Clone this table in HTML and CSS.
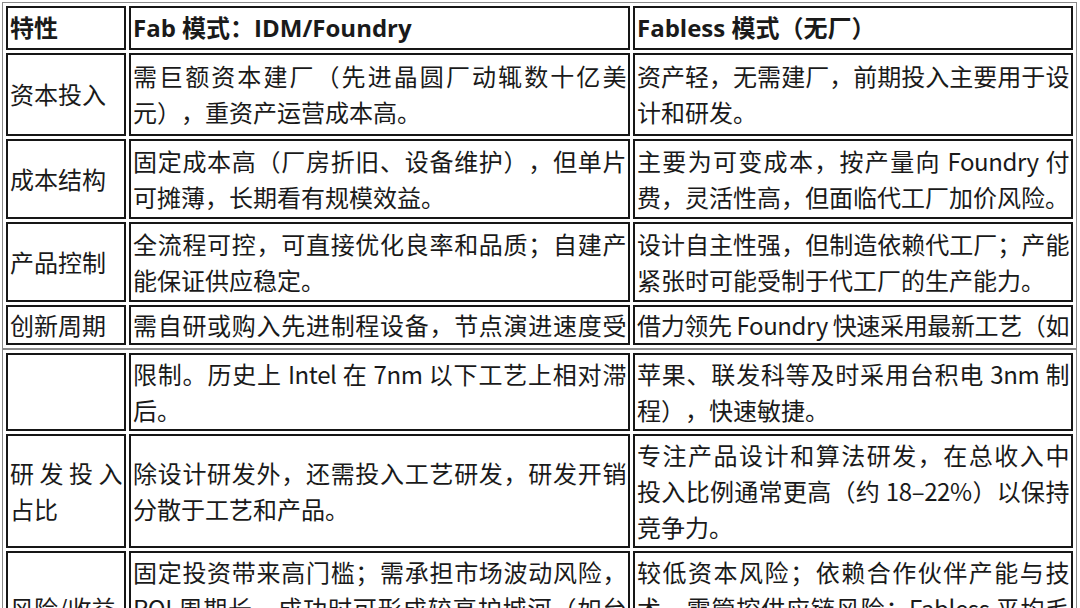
FILE: index.html
```html
<!DOCTYPE html>
<html lang="zh-CN">
<head>
<meta charset="utf-8">
<title>Fab vs Fabless</title>
<link rel="stylesheet" href="styles.css">
</head>
<body>
<table class="grid first">
  <colgroup><col class="c1"><col class="c2"><col class="c3"></colgroup>
  <tr class="head">
    <th>特性</th>
    <th>Fab 模式：IDM/Foundry</th>
    <th>Fabless 模式（无厂）</th>
  </tr>
  <tr class="r-tall">
    <td>资本投入</td>
    <td><span class="ln">需巨额资本建厂（先进晶圆厂动辄数十亿美</span><span class="end">元），重资产运营成本高。</span></td>
    <td><span class="ln">资产轻，无需建厂，前期投入主要用于设</span><span class="end">计和研发。</span></td>
  </tr>
  <tr>
    <td>成本结构</td>
    <td><span class="ln">固定成本高（厂房折旧、设备维护），但单片</span><span class="end">可摊薄，长期看有规模效益。</span></td>
    <td><span class="ln">主要为可变成本，按产量向 Foundry 付</span><span class="end">费，灵活性高，但面临代工厂加价风险。</span></td>
  </tr>
  <tr>
    <td>产品控制</td>
    <td><span class="ln">全流程可控，可直接优化良率和品质；自建产</span><span class="end">能保证供应稳定。</span></td>
    <td><span class="ln">设计自主性强，但制造依赖代工厂；产能</span><span class="end">紧张时可能受制于代工厂的生产能力。</span></td>
  </tr>
  <tr class="split">
    <td>创新周期</td>
    <td><span class="ln">需自研或购入先进制程设备，节点演进速度受</span></td>
    <td><span class="ln">借力领先 Foundry 快速采用最新工艺（如</span></td>
  </tr>
</table>
<table class="grid second">
  <colgroup><col class="c1"><col class="c2"><col class="c3"></colgroup>
  <tr>
    <td></td>
    <td><span class="ln">限制。历史上 Intel 在 7nm 以下工艺上相对滞</span><span class="end">后。</span></td>
    <td><span class="ln">苹果、联发科等及时采用台积电 3nm 制</span><span class="end">程），快速敏捷。</span></td>
  </tr>
  <tr>
    <td><span class="ln">研发投入</span><span class="end">占比</span></td>
    <td><span class="ln">除设计研发外，还需投入工艺研发，研发开销</span><span class="end">分散于工艺和产品。</span></td>
    <td><span class="ln">专注产品设计和算法研发，在总收入中</span><span class="ln">投入比例通常更高（约 18–22%）以保持</span><span class="end">竞争力。</span></td>
  </tr>
  <tr>
    <td><span class="end">风险/收益</span></td>
    <td><span class="ln">固定投资带来高门槛；需承担市场波动风险，</span><span class="ln">ROI 周期长，成功时可形成较高护城河（如台</span><span class="end">积电）。</span></td>
    <td><span class="ln">较低资本风险；依赖合作伙伴产能与技</span><span class="ln">术，需管控供应链风险；Fabless 平均毛</span><span class="end">利率较高。</span></td>
  </tr>
</table>
</body>
</html>
```

FILE: styles.css
```css
html, body {
  margin: 0;
  padding: 0;
  background: #ffffff;
}

body {
  font-family: "Noto Sans CJK SC", sans-serif;
  font-size: 24px;
  color: #1a1a1a;
}

.grid {
  table-layout: fixed;
  border-collapse: separate;
  border-spacing: 3px;
  border: 1px solid #8a8a8a;
  margin-left: 2px;
  width: 1075px;
}

.first {
  margin-top: 2px;
}

.second {
  margin-top: 0;
}

.c1 { width: 120px; }
.c2 { width: 501px; }
.c3 { width: 440px; }

.grid th,
.grid td {
  box-sizing: border-box;
  border: 2px solid #161616;
  padding: 2px 2px;
  line-height: 36px;
  vertical-align: middle;
  text-align: left;
  text-spacing-trim: space-all;
}

.second th,
.second td {
  padding: 1px 2px;
}

.grid th {
  font-family: "Open Sans", "Noto Sans CJK SC", sans-serif;
  font-weight: 700;
}

.grid .r-tall td {
  padding-top: 3px;
  padding-bottom: 4px;
}

.split td {
  padding-top: 0;
  padding-bottom: 0;
}

.ln {
  display: block;
  text-align: justify;
  text-align-last: justify;
  letter-spacing: -0.4px;
}

.end {
  display: block;
  white-space: nowrap;
}
```
